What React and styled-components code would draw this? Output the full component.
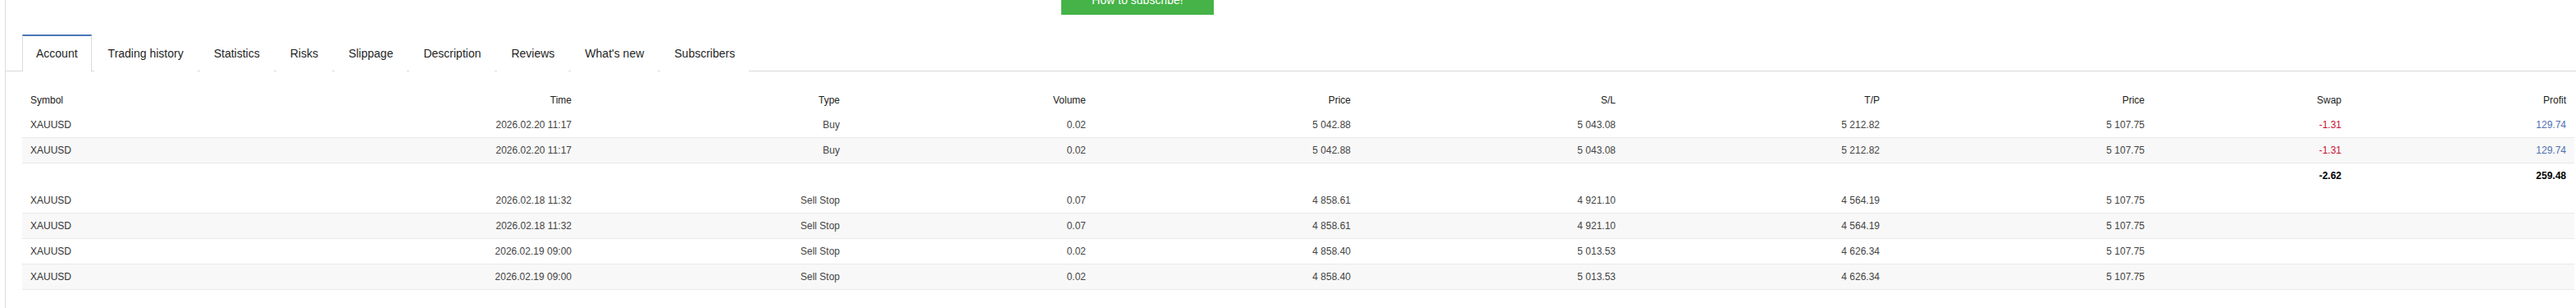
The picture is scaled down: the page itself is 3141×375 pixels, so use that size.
import styled, { createGlobalStyle } from "styled-components";

const GlobalStyle = createGlobalStyle`
  html, body {
    margin: 0;
    padding: 0;
    background: #ffffff;
  }
  body {
    font-family: "Liberation Sans", Arial, sans-serif;
    color: #333;
  }
`;

const Page = styled.div`
  margin-left: 6px;
  min-height: 375px;
  border-left: 1px solid #dcdcdc;
  box-sizing: border-box;
`;

const TopBar = styled.div`
  display: flex;
  padding-left: 1287px;
  height: 18px;
  overflow: hidden;
`;

const SubscribeButton = styled.button`
  width: 186px;
  height: 35px;
  margin-top: -17px;
  border: none;
  background: #45b347;
  color: #fff;
  font-family: "Liberation Sans", Arial, sans-serif;
  font-size: 14px;
  line-height: 35px;
  padding: 0;
`;

const TabBar = styled.div`
  display: flex;
  margin-top: 24px;
  padding-left: 20px;
  border-bottom: 1px solid #dadada;
`;

const Tab = styled.div`
  height: 42px;
  line-height: 42px;
  padding: 0 16px;
  margin-right: 3px;
  font-size: 14px;
  color: #1f1f1f;
  border-top: 2px solid ${(p) => (p.$active ? "#4b76b7" : "transparent")};
  border-left: 1px solid ${(p) => (p.$active ? "#dadada" : "transparent")};
  border-right: 1px solid ${(p) => (p.$active ? "#dadada" : "transparent")};
  background: #fff;
  margin-bottom: -1px;
  padding-bottom: 1px;
  white-space: nowrap;
`;

const Table = styled.div`
  margin: 19px 2px 0 20px;
  font-size: 12px;
`;

const cols = "100px 580px 327px 300px 323px 323px 322px 323px 240px 274px";

const Row = styled.div`
  display: grid;
  grid-template-columns: ${cols};
  height: ${(p) => (p.$plain ? "31px" : "30px")};
  align-items: center;
  background: ${(p) => (p.$alt ? "#f8f8f8" : "#fff")};
  border-bottom: ${(p) => (p.$plain ? "none" : "1px solid #e9e9e9")};
`;

const TotalRow = styled(Row)`
  height: 30px;
`;

const Cell = styled.div`
  padding: 0 10px;
  text-align: ${(p) => (p.$left ? "left" : "right")};
  color: ${(p) => p.$color || "#444"};
  font-weight: ${(p) => (p.$bold ? "bold" : "normal")};
  white-space: nowrap;
`;

const HeadCell = styled(Cell)`
  color: #222;
`;

const tabs = [
  "Account",
  "Trading history",
  "Statistics",
  "Risks",
  "Slippage",
  "Description",
  "Reviews",
  "What's new",
  "Subscribers",
];

const heads = ["Symbol", "Time", "Type", "Volume", "Price", "S/L", "T/P", "Price", "Swap", "Profit"];

const positions = [
  ["XAUUSD", "2026.02.20 11:17", "Buy", "0.02", "5 042.88", "5 043.08", "5 212.82", "5 107.75", "-1.31", "129.74"],
  ["XAUUSD", "2026.02.20 11:17", "Buy", "0.02", "5 042.88", "5 043.08", "5 212.82", "5 107.75", "-1.31", "129.74"],
];

const orders = [
  ["XAUUSD", "2026.02.18 11:32", "Sell Stop", "0.07", "4 858.61", "4 921.10", "4 564.19", "5 107.75", "", ""],
  ["XAUUSD", "2026.02.18 11:32", "Sell Stop", "0.07", "4 858.61", "4 921.10", "4 564.19", "5 107.75", "", ""],
  ["XAUUSD", "2026.02.19 09:00", "Sell Stop", "0.02", "4 858.40", "5 013.53", "4 626.34", "5 107.75", "", ""],
  ["XAUUSD", "2026.02.19 09:00", "Sell Stop", "0.02", "4 858.40", "5 013.53", "4 626.34", "5 107.75", "", ""],
];

const cellColor = (i) => (i === 8 ? "#c8102e" : i === 9 ? "#4d70b0" : undefined);

const DataRow = ({ row, alt }) => (
  <Row $alt={alt}>
    {row.map((v, i) => (
      <Cell key={i} $left={i === 0} $color={i === 0 ? "#333" : cellColor(i)}>
        {v}
      </Cell>
    ))}
  </Row>
);

export default function App() {
  return (
    <>
      <GlobalStyle />
      <Page>
        <TopBar>
          <SubscribeButton>How to subscribe!</SubscribeButton>
        </TopBar>
        <TabBar>
          {tabs.map((t, i) => (
            <Tab key={t} $active={i === 0}>
              {t}
            </Tab>
          ))}
        </TabBar>
        <Table>
          <Row $plain>
            {heads.map((h, i) => (
              <HeadCell key={i} $left={i === 0}>
                {h}
              </HeadCell>
            ))}
          </Row>
          {positions.map((r, i) => (
            <DataRow key={"p" + i} row={r} alt={i % 2 === 1} />
          ))}
          <TotalRow $plain>
            {heads.map((_, i) => (
              <Cell key={i} $bold $color="#000">
                {i === 8 ? "-2.62" : i === 9 ? "259.48" : ""}
              </Cell>
            ))}
          </TotalRow>
          {orders.map((r, i) => (
            <DataRow key={"o" + i} row={r} alt={i % 2 === 1} />
          ))}
        </Table>
      </Page>
    </>
  );
}
